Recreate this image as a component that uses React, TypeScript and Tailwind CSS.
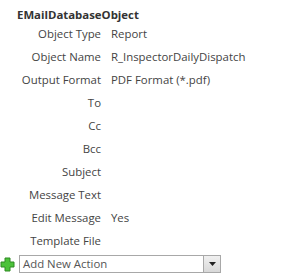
import React from "react";

const rows: [string, string][] = [
  ["Object Type", "Report"],
  ["Object Name", "R_InspectorDailyDispatch"],
  ["Output Format", "PDF Format (*.pdf)"],
  ["To", ""],
  ["Cc", ""],
  ["Bcc", ""],
  ["Subject", ""],
  ["Message Text", ""],
  ["Edit Message", "Yes"],
  ["Template File", ""],
];

export default function App() {
  return (
    <div
      className="w-[289px] h-[279px] bg-white text-[#444] text-[11.4px] pt-[7px] overflow-hidden"
      style={{ fontFamily: '"Open Sans", "Noto Sans", sans-serif' }}
    >
      <div className="pl-[17px] h-[15px] leading-[15px] font-bold text-[#333]">
        EMailDatabaseObject
      </div>
      <div className="flex flex-col">
        {rows.map(([label, value]) => (
          <div key={label} className="flex h-[23px] items-center">
            <div className="w-[101px] text-right">{label}</div>
            <div className="pl-[10px]">{value}</div>
          </div>
        ))}
      </div>
      <div className="flex items-center mt-[3px] h-[18px]">
        <svg width="15" height="15" viewBox="0 0 15 15" className="mr-[4px]">
          <path
            d="M5 1 H10 V5 H14 V10 H10 V14 H5 V10 H1 V5 H5 Z"
            fill="#4cc23a"
            stroke="#2e8a22"
            strokeWidth="1"
          />
        </svg>
        <div className="w-[202px] h-[18px] border border-[#a8a8a8] flex items-center">
          <div className="flex-1 pl-[3px] leading-[16px] text-[#555]">Add New Action</div>
          <div className="w-[17px] h-[16px] border-l border-[#a8a8a8] bg-gradient-to-b from-[#f0f0f0] to-[#d8d8d8] flex items-center justify-center">
            <svg width="7" height="4" viewBox="0 0 7 4">
              <path d="M0 0 H7 L3.5 4 Z" fill="#222" />
            </svg>
          </div>
        </div>
      </div>
    </div>
  );
}
